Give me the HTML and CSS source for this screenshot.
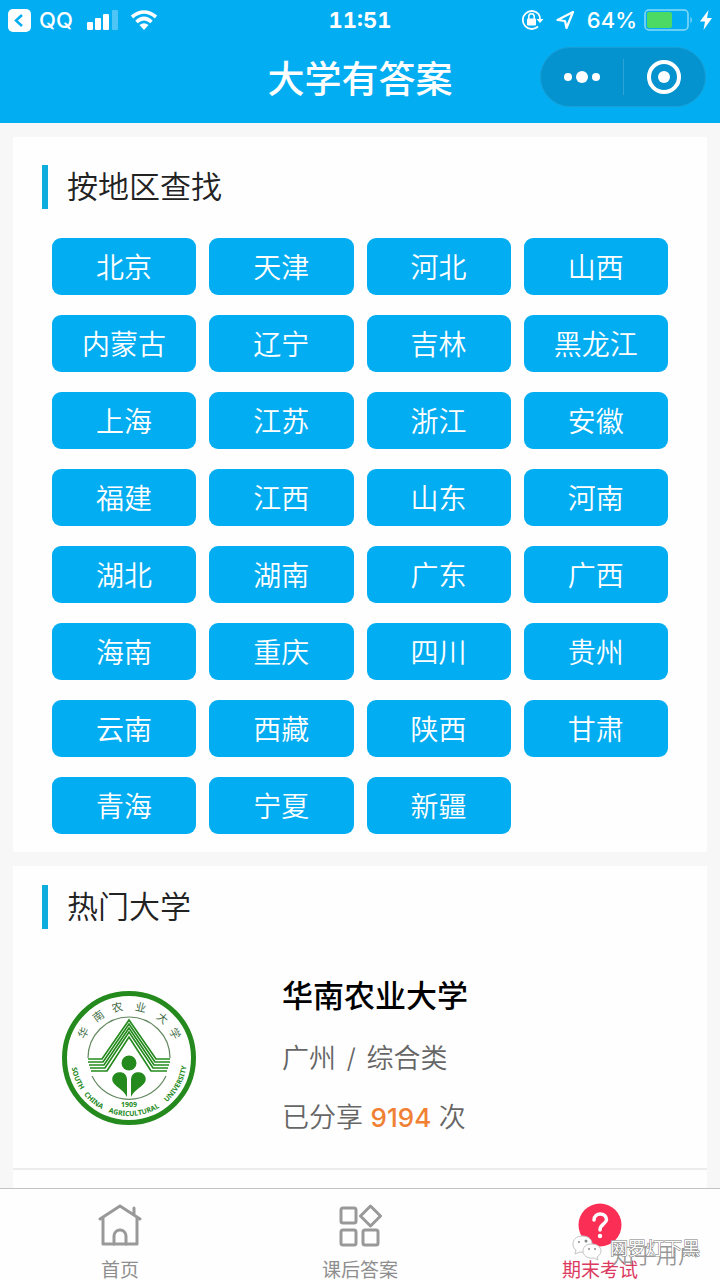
FILE: index.html
```html
<!DOCTYPE html>
<html lang="zh-CN">
<head>
  <meta charset="UTF-8" />
  <meta name="viewport" content="width=device-width, initial-scale=1.0"/>
  <title>大学有答案</title>
  <link rel="stylesheet" href="styles.css">
</head>
<body>

  <header>
    <!-- Status bar -->
    <div class="status-bar">
      <div class="status-left">
        <svg width="24" height="24" viewBox="0 0 24 24">
          <rect x="0" y="1" width="23" height="23" rx="5" fill="#fff"/>
          <path d="M14 7L8 12.500L14 18" fill="none" stroke="#03adf1" stroke-width="2.500"/>
        </svg>
        <span class="app-name">QQ</span>
        <svg width="31" height="20" viewBox="0 0 31 20" fill="#fff">
          <rect x="0" y="12" width="6" height="8" rx="1"/>
          <rect x="8" y="8" width="6" height="12" rx="1"/>
          <rect x="16" y="4" width="6" height="16" rx="1"/>
          <rect x="25" y="0" width="6" height="20" rx="1" opacity="0.3"/>
        </svg>
        <svg class="wifi" width="28" height="20" viewBox="0 0 28 20">
          <path d="M2 7Q14 -3 26 7M6.500 12Q14 5 21.500 12" fill="none" stroke="#fff" stroke-width="3.600"/>
          <path d="M9.500 15Q14 11.500 18.500 15L14 20Z" fill="#fff"/>
        </svg>
      </div>
      <div class="clock">11:51</div>
      <div class="status-right">
        <svg width="23" height="22" viewBox="0 0 23 22">
          <path d="M17.500 5A9 9 0 1 0 17 17.500M17.500 5A9 9 0 0 1 19 10" fill="none" stroke="#fff" stroke-width="1.800"/>
          <path d="M15.500 10H22.500L19 14Z" fill="#fff"/>
          <rect x="6" y="9.500" width="9" height="7" rx="1" fill="#fff"/>
          <path d="M7.800 10V7.500A2.700 2.700 0 0 1 13.200 7.500V10" fill="none" stroke="#fff" stroke-width="1.500"/>
        </svg>
        <svg class="arrow" width="19" height="20" viewBox="0 0 19 20">
          <path d="M17 2L1.500 10L9 11L10.500 18Z" fill="none" stroke="#fff" stroke-width="2.200" stroke-linejoin="round"/>
        </svg>
        <span class="percent">64%</span>
        <svg width="49" height="22" viewBox="0 0 49 22">
          <rect x="1" y="1" width="43" height="20" rx="4" fill="none" stroke="#fff" stroke-width="1.500" opacity="0.55"/>
          <rect x="3" y="3" width="25" height="16" rx="2" fill="#4cd964"/>
          <path d="M46.500 7.500Q49 11 46.500 14.500Z" fill="#fff" opacity="0.6"/>
        </svg>
        <svg width="12" height="20" viewBox="0 0 12 20">
          <path d="M8.500 0L0 11.500H5L3.500 20L12 8H7Z" fill="#fff"/>
        </svg>
      </div>
    </div>

    <!-- Title bar -->
    <div class="title-bar">
      <h1>大学有答案</h1>
      <div class="capsule">
        <button aria-label="更多">
          <svg width="38" height="14" viewBox="0 0 38 14" fill="#fff">
            <circle cx="5" cy="7" r="4"/>
            <circle cx="19" cy="7" r="6"/>
            <circle cx="33" cy="7" r="4"/>
          </svg>
        </button>
        <button aria-label="关闭">
          <svg width="36" height="36" viewBox="0 0 36 36">
            <circle cx="18" cy="18" r="15" fill="none" stroke="#fff" stroke-width="4"/>
            <circle cx="18" cy="18" r="6" fill="#fff"/>
          </svg>
        </button>
      </div>
    </div>
  </header>

  <main>
    <section class="card region-card">
      <h2>按地区查找</h2>
      <div class="regions">
        <button>北京</button>
        <button>天津</button>
        <button>河北</button>
        <button>山西</button>
        <button>内蒙古</button>
        <button>辽宁</button>
        <button>吉林</button>
        <button>黑龙江</button>
        <button>上海</button>
        <button>江苏</button>
        <button>浙江</button>
        <button>安徽</button>
        <button>福建</button>
        <button>江西</button>
        <button>山东</button>
        <button>河南</button>
        <button>湖北</button>
        <button>湖南</button>
        <button>广东</button>
        <button>广西</button>
        <button>海南</button>
        <button>重庆</button>
        <button>四川</button>
        <button>贵州</button>
        <button>云南</button>
        <button>西藏</button>
        <button>陕西</button>
        <button>甘肃</button>
        <button>青海</button>
        <button>宁夏</button>
        <button>新疆</button>
      </div>
    </section>

    <section class="card hot-card">
      <h2>热门大学</h2>
      <a class="school" href="#">
        <svg class="seal" width="136" height="136" viewBox="-68 -68 136 136">
          <defs>
            <path id="sealArc" d="M-58 0A58 58 0 0 0 58 0"/>
          </defs>
          <circle r="64.500" fill="#fff" stroke="#258a1d" stroke-width="5"/>
          <path d="M-41 0A41 41 0 0 1 41 0M-37 18A41 41 0 0 0 37 18" fill="none" stroke="#62885f" stroke-width="1.200"/>
          <g fill="none" stroke="#258a1d" stroke-width="1.700">
            <path d="M-41 1H-27L0 -38L27 1H41"/>
            <path d="M-41 4H-26L0 -34L26 4H41"/>
            <path d="M-40 7H-25L0 -30L25 7H40"/>
            <path d="M-39 10H-24L0 -26L24 10H39"/>
            <path d="M-38 13H-22L0 -21L22 13H38"/>
          </g>
          <g fill="#258a1d">
            <circle cy="5" r="7.500"/>
            <path d="M-2 39V21A7.500 7.500 0 0 0 -16 18C-20 27 -7 29 -2 39Z"/>
            <path d="M2 39V21A7.500 7.500 0 0 1 16 18C20 27 7 29 2 39Z"/>
          </g>
          <g class="seal-name">
            <text y="-48" transform="rotate(-61)">华</text>
            <text y="-48" transform="rotate(-36)">南</text>
            <text y="-48" transform="rotate(-13)">农</text>
            <text y="-48" transform="rotate(13)">业</text>
            <text y="-48" transform="rotate(40)">大</text>
            <text y="-48" transform="rotate(62)">学</text>
          </g>
          <g class="seal-latin">
            <text><textPath href="#sealArc" startOffset="12%">SOUTH</textPath></text>
            <text><textPath href="#sealArc" startOffset="28%">CHINA</textPath></text>
            <text><textPath href="#sealArc" startOffset="53%">AGRICULTURAL</textPath></text>
            <text><textPath href="#sealArc" startOffset="84%">UNIVERSITY</textPath></text>
            <text class="seal-year" y="49">1909</text>
          </g>
        </svg>
        <div class="school-info">
          <h3>华南农业大学</h3>
          <p>广州 <span class="sep">/</span> 综合类</p>
          <p>已分享 <b>9194</b> 次</p>
        </div>
      </a>
    </section>
  </main>

  <!-- Bottom tabs -->
  <nav>
    <a href="#">
      <svg width="44" height="44" viewBox="0 0 44 44" fill="none" stroke="#999" stroke-width="3" stroke-linecap="round" stroke-linejoin="round">
        <path d="M2 16L22 3L42 16M36 12V5M5 15V41H39V15"/>
        <path d="M16 41V33A6 6 0 0 1 28 33V41"/>
      </svg>
      <span>首页</span>
    </a>
    <a href="#">
      <svg width="44" height="44" viewBox="0 0 44 44" fill="none" stroke="#999" stroke-width="3" stroke-linejoin="round">
        <rect x="3" y="5" width="15" height="15" rx="2"/>
        <rect x="3" y="27" width="15" height="15" rx="2"/>
        <rect x="25" y="27" width="15" height="15" rx="2"/>
        <path d="M32.500 3L42.500 13L32.500 23L22.500 13Z"/>
      </svg>
      <span>课后答案</span>
    </a>
    <a href="#" class="active">
      <svg width="44" height="44" viewBox="0 0 44 44">
        <circle cx="22" cy="22" r="21.500" fill="#fb2f55"/>
        <path d="M16 17C16 9 28.500 9 28.500 16.500C28.500 21 22 21 22 27" fill="none" stroke="#fff" stroke-width="3.500" stroke-linecap="round"/>
        <circle cx="22" cy="33" r="2.200" fill="#fff"/>
      </svg>
      <span>期末考试</span>
    </a>

    <div class="watermark">
      <svg width="30" height="26" viewBox="0 0 30 26" fill="#fff" stroke="#c4c4c4" stroke-width="1">
        <path d="M10 1C4 1 1 5 1 9C1 12 2 14 4 15L3 19L8 17C16 18 20 14 20 9C20 4 16 1 10 1Z"/>
        <path d="M20 9C14 9 11 12 11 16C11 20 15 24 22 23L26 25L25 22C28 20 29 18 29 16C29 12 25 9 20 9Z"/>
        <g fill="#888" stroke="none">
          <circle cx="7" cy="7" r="1"/>
          <circle cx="14" cy="6" r="1.500"/>
          <circle cx="17" cy="14" r="1"/>
          <circle cx="23" cy="14" r="1"/>
        </g>
      </svg>
      <span class="source">知乎用户</span>
      <span class="account">网罗灯下黑</span>
    </div>
  </nav>

</body>
</html>
```
FILE: styles.css
```css
* {
  box-sizing: border-box;
}

body {
  font-family: Inter, "Noto Sans CJK SC", sans-serif;
  margin: 0;
  height: 100vh;
  display: flex;
  flex-direction: column;
  background: #f7f7f7;
}

h1,
h2,
h3,
p {
  margin: 0;
}

button {
  border: none;
  padding: 0;
  font-family: inherit;
  cursor: pointer;
}

a {
  text-decoration: none;
}

svg {
  display: block;
  flex-shrink: 0;
}

header {
  background-color: #03adf1;
  color: white;
}

/* Status bar */
.status-bar {
  display: grid;
  grid-template-columns: 1fr auto 1fr;
  align-items: center;
  height: 40px;
  padding: 0 8px;
  font-size: 22px;
  font-weight: 500;
}

.status-left,
.status-right {
  display: flex;
  align-items: center;
}

.status-right {
  justify-content: flex-end;
  gap: 7px;
}

.app-name {
  margin: 0 14px 0 7px;
}

.wifi {
  margin-left: 12px;
}

.clock {
  font-weight: bold;
  font-variant-numeric: tabular-nums;
}

.arrow {
  margin: 0 5px;
}

/* Title bar */
.title-bar {
  display: grid;
  grid-template-columns: 1fr auto 1fr;
  align-items: start;
  height: 83px;
  padding: 7px 14px 0;
}

.title-bar h1 {
  grid-column: 2;
  font-size: 37px;
  font-weight: 500;
  line-height: 66px;
}

.capsule {
  justify-self: end;
  display: flex;
  width: 166px;
  height: 60px;
  border: 1px solid #199fd6;
  border-radius: 30px;
  background-color: #0593d0;
}

.capsule button {
  flex: 1;
  display: flex;
  align-items: center;
  justify-content: center;
  margin: 11px 0;
  background: none;
}

.capsule button + button {
  border-left: 1px solid #2da3d6;
}

main {
  flex: 1;
  min-height: 0;
  display: flex;
  flex-direction: column;
  gap: 14px;
  padding: 14px 13px 0;
  overflow: hidden;
}

.card {
  background: #fefefe;
}

.card h2 {
  margin-left: 29px;
  padding-left: 19px;
  border-left: 6px solid #0eaddd;
  color: #222;
  font-size: 31px;
  font-weight: 350;
  line-height: 44px;
}

.region-card {
  padding: 28px 0 18px;
}

.hot-card {
  flex: 1;
  padding-top: 19px;
}

.regions {
  display: grid;
  grid-template-columns: repeat(4, 1fr);
  gap: 20px 13px;
  padding: 29px 39px 0;
}

.regions button {
  height: 57px;
  padding-bottom: 2px;
  border-radius: 9px;
  background-color: #03adf1;
  color: white;
  font-size: 28px;
  font-weight: 350;
}

/* School list */
.school {
  display: flex;
  align-items: center;
  gap: 85px;
  padding: 43px 48px 30px;
  border-bottom: 2px solid #ececec;
}

.school-info {
  display: flex;
  flex-direction: column;
  gap: 19px;
}

.school h3 {
  color: #000;
  font-size: 31px;
  font-weight: 500;
  line-height: 48px;
}

.school p {
  color: #666;
  font-size: 27px;
  font-weight: 350;
  line-height: 40px;
}

.school b {
  color: #f08033;
  font-size: 26px;
  font-weight: 500;
}

.sep {
  margin: 0 3px;
}

.seal {
  margin-top: 5px;
}

.seal text {
  text-anchor: middle;
}

.seal-name {
  fill: #47704a;
  font-family: "Noto Sans CJK SC", sans-serif;
  font-size: 11px;
}

.seal-latin {
  fill: #258a1d;
  font-family: "Noto Sans", sans-serif;
  font-size: 7px;
  font-weight: bold;
}

/* Bottom tabs */
nav {
  position: relative;
  display: grid;
  grid-template-columns: repeat(3, 1fr);
  height: 93px;
  padding-top: 14px;
  border-top: 1px solid #c4c4c4;
  background: #fefefe;
}

nav a {
  display: flex;
  flex-direction: column;
  align-items: center;
  gap: 10px;
  color: #8e8e8e;
  font-size: 19px;
  line-height: 28px;
}

nav a.active {
  color: #dc3a5e;
}

.watermark {
  position: absolute;
  right: 20px;
  bottom: 10px;
  width: 128px;
  height: 36px;
  pointer-events: none;
}

.watermark span {
  position: absolute;
  right: 0;
  white-space: nowrap;
}

.account {
  top: 1px;
  color: white;
  font-size: 18px;
  line-height: 26px;
  -webkit-text-stroke: 1px #777;
  paint-order: stroke fill;
}

.source {
  top: 6px;
  color: #999;
  font-size: 22px;
  font-weight: 350;
  line-height: 28px;
}
```
